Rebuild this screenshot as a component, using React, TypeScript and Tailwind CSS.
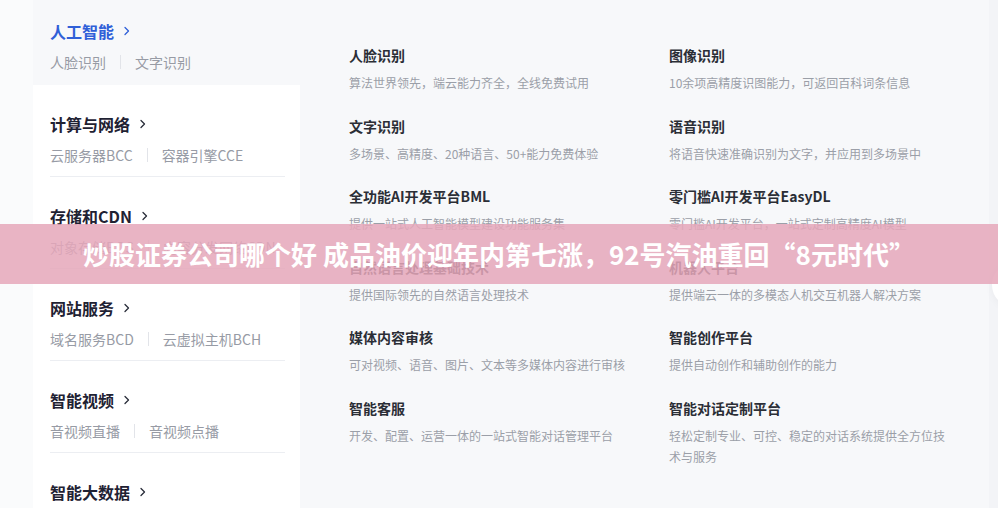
import React from "react";

interface NavGroup {
  title: string;
  subs: string[];
  active?: boolean;
}

const groups: NavGroup[] = [
  { title: "人工智能", subs: ["人脸识别", "文字识别"], active: true },
  { title: "计算与网络", subs: ["云服务器BCC", "容器引擎CCE"] },
  { title: "存储和CDN", subs: ["对象存储BOS", "内容分发网络CDN"] },
  { title: "网站服务", subs: ["域名服务BCD", "云虚拟主机BCH"] },
  { title: "智能视频", subs: ["音视频直播", "音视频点播"] },
  { title: "智能大数据", subs: [] },
];

const products = [
  { name: "人脸识别", desc: "算法世界领先，端云能力齐全，全线免费试用" },
  { name: "图像识别", desc: "10余项高精度识图能力，可返回百科词条信息" },
  { name: "文字识别", desc: "多场景、高精度、20种语言、50+能力免费体验" },
  { name: "语音识别", desc: "将语音快速准确识别为文字，并应用到多场景中" },
  { name: "全功能AI开发平台BML", desc: "提供一站式人工智能模型建设功能服务集" },
  { name: "零门槛AI开发平台EasyDL", desc: "零门槛AI开发平台，一站式定制高精度AI模型" },
  { name: "自然语言处理基础技术", desc: "提供国际领先的自然语言处理技术" },
  { name: "机器人平台", desc: "提供端云一体的多模态人机交互机器人解决方案" },
  { name: "媒体内容审核", desc: "可对视频、语音、图片、文本等多媒体内容进行审核" },
  { name: "智能创作平台", desc: "提供自动创作和辅助创作的能力" },
  { name: "智能客服", desc: "开发、配置、运营一体的一站式智能对话管理平台" },
  { name: "智能对话定制平台", desc: "轻松定制专业、可控、稳定的对话系统提供全方位技术与服务" },
];

const Chevron = ({ className }: { className: string }) => (
  <svg width="6" height="10" viewBox="0 0 6 10" fill="none" className={className}>
    <path d="M1 1.5L4.5 5L1 8.5" stroke="currentColor" strokeWidth="1.3" strokeLinecap="round" strokeLinejoin="round" />
  </svg>
);

const SideItem = ({ group, index }: { group: NavGroup; index: number }) => {
  const first = index === 0;
  return (
    <div
      className={`shrink-0 pl-[17px] pr-[15px] ${first ? "bg-[#f7f8fa] h-[85px] pt-[20px]" : "h-[92px] pt-[28px]"}`}
    >
      <div className={`h-full ${first ? "" : "border-b border-[#eceef2]"}`}>
        <div className="flex items-center h-[22px]">
          <span
            className={`text-[16px] font-bold leading-[22px] ${group.active ? "text-[#3060d8]" : "text-[#1f2233]"}`}
          >
            {group.title}
          </span>
          <Chevron className={`ml-[10px] ${group.active ? "text-[#3060d8]" : "text-[#2a2d3a]"}`} />
        </div>
        {group.subs.length > 0 && (
          <div className="flex items-center mt-[9px] h-[22px] text-[14px] leading-[22px] text-[#979ba5]">
            <span>{group.subs[0]}</span>
            <span className="mx-[14px] w-px h-[14px] bg-[#e2e4e9]" />
            <span>{group.subs[1]}</span>
          </div>
        )}
      </div>
    </div>
  );
};

export default function App() {
  return (
    <div className="relative w-[998px] h-[508px] overflow-hidden flex bg-[#fafbfc] font-['Noto_Sans_CJK_SC',sans-serif]">
      <div className="w-[33px] shrink-0" />

      {/* Sidebar */}
      <aside className="w-[267px] shrink-0 bg-white flex flex-col">
        {groups.map((g, i) => (
          <SideItem key={g.title} group={g} index={i} />
        ))}
      </aside>

      {/* Product panel */}
      <main className="flex-1 bg-[#f7f8fa] pl-[49px] pt-[45px]">
        <div className="grid grid-cols-[320px_320px] gap-y-[22.6px]">
          {products.map((p) => (
            <div key={p.name} className="w-[280px]">
              <div className="text-[14px] leading-[20px] font-semibold text-[#2b2e36]">{p.name}</div>
              <div className="mt-[7px] text-[12px] leading-[21px] text-[#9b9fa8]">{p.desc}</div>
            </div>
          ))}
        </div>
      </main>

      <div className="w-[22px] shrink-0 bg-[#f3f4f7]" />

      {/* Floating round button at right edge */}
      <div className="absolute left-[992px] top-[263px] w-[44px] h-[44px] rounded-full bg-white shadow-[0_2px_8px_rgba(0,0,0,0.04)]" />

      {/* Headline banner */}
      <div className="absolute left-0 right-0 top-[224px] h-[60px] bg-[#e5a7ba]/85 flex items-center justify-center">
        <span className="text-white text-[26px] font-bold leading-none">
          炒股证券公司哪个好 成品油价迎年内第七涨，92号汽油重回“8元时代”
        </span>
      </div>
    </div>
  );
}
